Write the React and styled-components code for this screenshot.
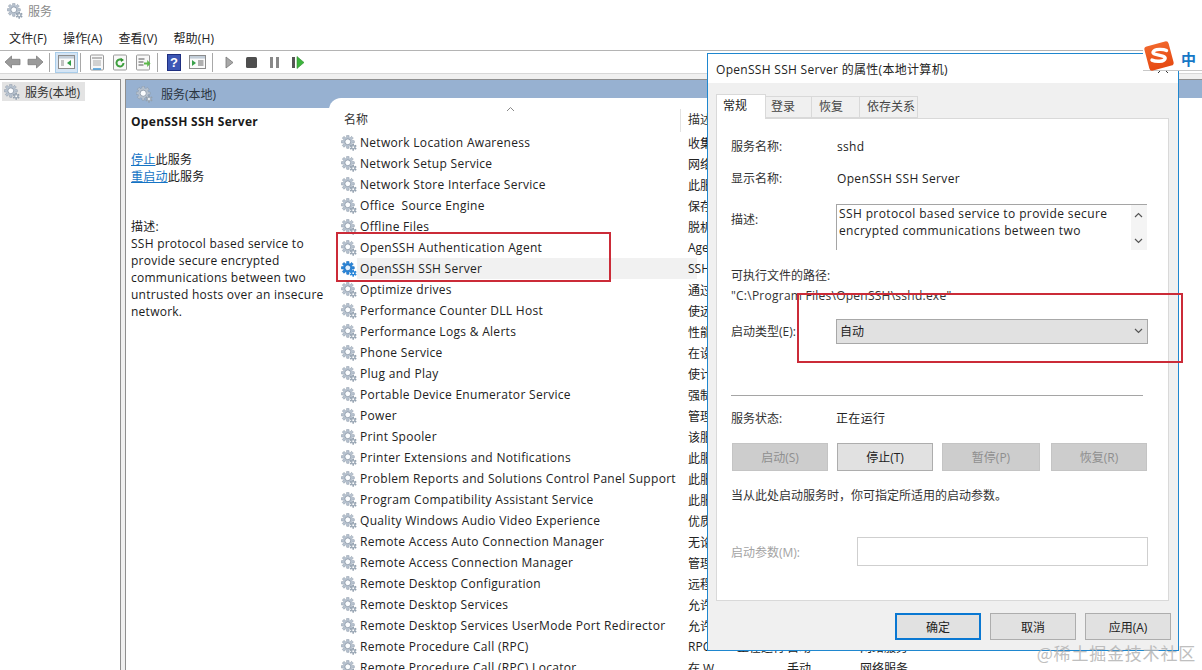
import React from "react";
import styled, { createGlobalStyle } from "styled-components";

const Global = createGlobalStyle`
  html, body { margin: 0; padding: 0; background: #fff; width: 1202px; height: 670px; overflow: hidden; }
  body { font-family: "Open Sans", "Noto Sans CJK SC", sans-serif; font-size: 12px; color: #1a1a1a; }
  * { box-sizing: border-box; }
`;

const Page = styled.div`
  position: relative; width: 1202px; height: 670px; overflow: hidden; background: #fff;
  display: flex; flex-direction: column;
`;
const TitleBar = styled.div`
  height: 26px; display: flex; align-items: center; gap: 5px; padding: 0 0 5px 7px; color: #8a8a8a; font-size: 12px;
`;
const MenuBar = styled.div`
  height: 24px; display: flex; align-items: center; gap: 16px; padding: 0 0 1px 9px; font-size: 12px; color: #222; letter-spacing: .15px;
`;
const ToolBar = styled.div`
  height: 23px; border-top: 1px solid #b4b4b4; display: flex; align-items: center; background: #fff;
`;
const ToolIcon = styled.div`
  width: ${p => p.$w || 23}px; height: 21px; flex: none; display: flex; align-items: center; justify-content: center;
  ${p => p.$on && `background:#d5e5f5; box-shadow: inset 0 0 0 1px #a9cdea;`}
`;
const Sep = styled.div`width: 1px; height: 19px; flex: none; background: #a8a8a8; margin: 0 ${p => p.$r}px 0 ${p => p.$l}px;`;
const Body = styled.div`
  flex: 1; display: flex; background: #f0f0f0; padding-top: 5px; border-top: 1px solid #d8d8d8; min-height: 0;
`;
const Tree = styled.div`
  width: 121px; background: #fff; border-top: 1px solid #8f8f8f; border-right: 1px solid #8f8f8f; padding: 2px 0 0 2px;
`;
const TreeItem = styled.div`
  width: 83px; height: 19px; background: #e3e3e3; display: flex; align-items: center; gap: 5px; padding-left: 2px; font-size: 12px; color: #333;
`;
const Main = styled.div`
  flex: 1; margin-left: 4px; border-left: 1px solid #8f8f8f; border-top: 1px solid #8f8f8f; background: #fff; display: flex; flex-direction: column; min-width: 0;
`;
const Band = styled.div`
  height: 28px; background: #97b1d1; display: flex; align-items: center; gap: 8px; padding: 0 0 0 10px; font-size: 12px; color: #2a3440;
`;
const Split = styled.div`flex: 1; display: flex; min-height: 0;`;
const Info = styled.div`width: 203px; padding: 5px 0 0 5px; font-size: 12px; line-height: 17px; letter-spacing: .25px;`;
const InfoTitle = styled.div`font-weight: 700; font-size: 12px; letter-spacing: .3px; margin-bottom: 21px;`;
const InfoLink = styled.span`color: #1473c4; text-decoration: underline;`;
const InfoGap = styled.div`height: 33px;`;
const ListPane = styled.div`
  flex: 1; margin-top: -10px; background: #fff; border-radius: 12px 0 0 0; min-width: 0; overflow: hidden; position: relative;
`;
const ListHead = styled.div`
  position: relative; height: 34px; display: flex; align-items: flex-end; padding: 0 0 4px 15px; font-size: 12px; color: #333;
`;
const SortMark = styled.svg`position: absolute; left: 177px; top: 8px;`;
const HeadRule = styled.div`position: absolute; left: 351px; top: 11px; width: 1px; height: 23px; background: #e2e2e2;`;
const HeadDesc = styled.span`position: absolute; left: 359px; bottom: 4px;`;
const Row = styled.div`
  height: 21px; display: flex; align-items: center; padding-left: 12px; font-size: 12px; letter-spacing: .3px; white-space: pre;
  color: #222; position: relative;
`;
const RowSel = styled.div`
  position: absolute; left: 28px; width: 340px; top: 0; bottom: 0; background: #f1f1f1;
`;
const RowName = styled.span`position: relative; width: 328px; margin-left: 3px; flex: none;`;
const RowDesc = styled.span`position: relative; width: 49px; flex: none; letter-spacing: 0;`;
const RowCell = styled.span`width: ${p => p.$w}px; flex: none; letter-spacing: 0;`;

const Dialog = styled.div`
  position: absolute; left: 707px; top: 53px; width: 472px; height: 598px; background: #f0f0f0; border: 1px solid #1f87cf;
  display: flex; flex-direction: column;
`;
const DialogTitle = styled.div`
  height: 29px; background: #fff; display: flex; align-items: center; padding-left: 8px; font-size: 12px; letter-spacing: .3px; color: #222; flex: none; position: relative;
`;
const CloseIcon = styled.svg`position: absolute; right: 10px; top: 9px;`;
const Tabs = styled.div`
  height: 35px; display: flex; align-items: flex-end; padding-left: 8px; flex: none; position: relative; z-index: 1;
`;
const Tab = styled.div`
  height: ${p => p.$on ? 25 : 22}px; width: ${p => p.$w}px; background: ${p => p.$on ? "#fff" : "#f0f0f0"};
  border: 1px solid #d9d9d9; border-left: ${p => p.$on ? "1px solid #d9d9d9" : "none"}; border-bottom: ${p => p.$on ? "none" : "1px solid #d9d9d9"};
  display: flex; align-items: center; padding-left: ${p => p.$pad}px; font-size: 12px; color: ${p => p.$on ? "#222" : "#444"};
  margin-bottom: ${p => p.$on ? -1 : 0}px; padding-bottom: ${p => p.$on ? 4 : 2}px; flex: none;
`;
const Panel = styled.div`
  margin: 0 9px 0 8px; height: 483px; flex: none; background: #fff; border: 1px solid #d9d9d9; padding: 11px 15px 0 14px; display: flex; flex-direction: column; font-size: 12px; color: #222;
`;
const FieldRow = styled.div`
  display: flex; align-items: ${p => p.$top ? "flex-start" : "center"}; height: ${p => p.$h}px; flex: none; letter-spacing: .34px; margin-top: ${p => p.$mt || 0}px;
`;
const FieldLabel = styled.span`width: ${p => p.$w || 105}px; flex: none; margin-top: ${p => p.$mt || 0}px; letter-spacing: 0; color: ${p => p.$off ? "#a3a3a3" : "#333"};`;
const FieldValue = styled.span`margin-left: ${p => p.$ml ?? 1}px;`;
const DescBox = styled.div`
  width: 311px; height: 46px; margin-top: 10px; border: 1px solid #a5a5a5; border-right: none; border-bottom: none; position: relative; padding: 0 2px; line-height: 17px; font-size: 12px; letter-spacing: .38px;
`;
const ScrollBtn = styled.svg`position: absolute; right: 4px; ${p => p.$bottom ? "bottom: 6px;" : "top: 7px;"}`;
const ScrollTrack = styled.div`position: absolute; right: 0; top: 0; bottom: 0; width: 16px; background: #f4f4f4;`;
const PlainLine = styled.div`height: ${p => p.$h}px; margin-top: ${p => p.$mt || 0}px; flex: none; letter-spacing: ${p => p.$ls ?? 0}px; color: #333; display: flex; align-items: center;`;
const Select = styled.div`
  width: 312px; height: 25px; background: #e1e1e1; border: 1px solid #a8a8a8; display: flex; align-items: center; justify-content: space-between; padding: 0 4px 0 3px; letter-spacing: 0;
`;
const Rule = styled.div`height: 1px; width: 412px; background: #a5a5a5; flex: none; margin: 38px 0 13px;`;
const ButtonRow = styled.div`display: flex; flex: none; padding-left: 1px; height: 28px; margin-top: 16px;`;
const Btn = styled.div`
  width: ${p => p.$w}px; height: 28px; margin-right: ${p => p.$mr || 0}px; flex: none; display: flex; align-items: center; justify-content: center; font-size: 12px;
  background: ${p => p.$off ? "#cdcdcd" : "#e1e1e1"}; border: 1px solid ${p => p.$off ? "#c4c4c4" : "#adadad"}; color: ${p => p.$off ? "#8f8f8f" : "#222"};
`;
const ParamInput = styled.div`width: 291px; height: 29px; background: #fff; border: 1px solid #cfcfcf;`;
const Foot = styled.div`display: flex; justify-content: flex-end; gap: 9px; padding: 12px 7px 0 0; flex: none;`;
const FootBtn = styled.div`
  width: 86px; height: 27px; background: #e1e1e1; display: flex; align-items: center; justify-content: center; font-size: 12px; color: #222;
  border: ${p => p.$primary ? "2px solid #0a78d2" : "1px solid #adadad"};
`;
const Mark = styled.div`
  position: absolute; border: 2px solid #cb2b38; pointer-events: none;
`;
const Ime = styled.div`
  position: absolute; left: 1143px; top: 45px; width: 59px; height: 26px; background: #fff; border-bottom: 1px solid #c8c8c8;
`;
const ImeLogo = styled.svg`position: absolute; left: -1px; top: -6px;`;
const ImeText = styled.span`position: absolute; left: 38px; top: 3px; font-size: 15px; font-weight: 700; color: #1677c6;`;
const Watermark = styled.div`
  position: absolute; right: 6px; bottom: 5px; font-family: "Noto Sans CJK SC", sans-serif; font-size: 17px; color: #b4b4b4; letter-spacing: .8px; opacity: .85;
`;

const Gear = ({ size = 16, blue }) => {
  const c = blue ? "#2a86d8" : "#b7c2cf";
  const d = blue ? "#135fae" : "#7f8c9c";
  const teeth = [0, 45, 90, 135];
  return (
    <svg width={size} height={size} viewBox="0 0 16 16" style={{ flex: "none", position: "relative" }}>
      <g transform="translate(6.8 6.8)">
        {teeth.map(a => <rect key={a} x="-1.3" y="-6.6" width="2.6" height="13.2" rx=".6" fill={c} stroke={d} strokeWidth=".4" transform={`rotate(${a})`} />)}
        <circle r="4.6" fill={c} />
        <circle r="2.9" fill={blue ? "#dff0ff" : "#fbfdff"} stroke={d} strokeWidth=".7" />
      </g>
      <g transform="translate(12.2 12.2)">
        {[0, 60, 120].map(a => <rect key={a} x="-.8" y="-3.5" width="1.6" height="7" fill={blue ? "#2a86d8" : "#93a0ae"} transform={`rotate(${a})`} />)}
        <circle r="2.2" fill={blue ? "#2a86d8" : "#a3afbc"} />
        <circle r=".9" fill="#fff" />
      </g>
    </svg>
  );
};

const Arrow = ({ flip }) => (
  <svg width="17" height="14" viewBox="0 0 17 14" style={flip ? { transform: "scaleX(-1)" } : undefined}>
    <path d="M1 7 7.5 1v3.3H16v5.4H7.5V13z" fill="#9a9a9a" stroke="#7d7d7d" strokeWidth=".8" />
  </svg>
);
const WinIcon = ({ green, help }) => (
  <svg width="17" height="16" viewBox="0 0 17 16">
    <rect x=".5" y="1.5" width="16" height="13" fill="#fbfbfb" stroke="#8c8c8c" />
    <rect x="1" y="2" width="15" height="2.6" fill="#c3ced9" />
    {help
      ? <><path d="M3 6v6l4-3z" fill="#3aa14a" /><path d="M9 6.5h5.5v1H9zM9 8.5h5.5v1H9zM9 10.5h5.5v1H9z" fill="#666" /></>
      : <><path d="M3 6.5h3v1H3zM3 8.5h3v1H3zM3 10.5h3v1H3z" fill="#8a8a8a" /><path d="M13 6v6l-4-3z" fill={green ? "#2f9e44" : "#555"} /></>}
  </svg>
);
const DocIcon = ({ kind }) => (
  <svg width="16" height="17" viewBox="0 0 16 17">
    <rect x="1.5" y="1" width="13" height="15" rx="1" fill="#f8f8f8" stroke="#9a9a9a" />
    {kind === "list" && <><rect x="3" y="3" width="10" height="2" fill="#bbb" /><path d="M4 7h8M4 9h8M4 11h8" stroke="#aaa" /><path d="M4 15h8" stroke="#4a9bd8" strokeWidth="1.6" /></>}
    {kind === "refresh" && <><path d="M11.5 9a3.5 3.5 0 1 1-1.2-2.7" fill="none" stroke="#3f9f3f" strokeWidth="2" /><path d="M8.6 3.8 12 6 9 8z" fill="#2f8f2f" /></>}
    {kind === "export" && <><path d="M3.5 5h6M3.5 8h5M3.5 11h5" stroke="#555" /><path d="M9 8.5h3.2V6l3.3 3.5-3.3 3.5v-2.5H9z" fill="#5cb84a" /></>}
  </svg>
);
const HelpIcon = () => (
  <svg width="14" height="17" viewBox="0 0 14 17">
    <rect x=".5" y=".5" width="13" height="16" fill="#3d57b5" stroke="#1f2f80" />
    <text x="7" y="13" textAnchor="middle" fontSize="13" fontWeight="700" fill="#fff" fontFamily="Liberation Sans, sans-serif">?</text>
  </svg>
);
const Play = () => <svg width="9" height="13" viewBox="0 0 9 13"><path d="M1 1l7 5.5L1 12z" fill="#a8a8a8" stroke="#777" strokeWidth=".8" /></svg>;
const Stop = () => <svg width="11" height="11" viewBox="0 0 11 11"><rect width="11" height="11" rx="1.5" fill="#4e4e4e" /></svg>;
const Pause = () => <svg width="9" height="11" viewBox="0 0 9 11"><path d="M0 0h3v11H0zM6 0h3v11H6z" fill="#888" /></svg>;
const Resume = () => <svg width="12" height="13" viewBox="0 0 12 13"><path d="M0 1h3v11H0z" fill="#555" /><path d="M5 0.5l7 6-7 6z" fill="#3db43d" stroke="#2b8f2b" strokeWidth=".6" /></svg>;
const Chevron = ({ up, c = "#555" }) => (
  <svg width="9" height="6" viewBox="0 0 9 6"><path d={up ? "M1 5l3.5-3.5L8 5" : "M1 1l3.5 3.5L8 1"} fill="none" stroke={c} strokeWidth="1.2" /></svg>
);

const services = [
  { name: "Network Location Awareness", desc: "收集" }, { name: "Network Setup Service", desc: "网络" }, { name: "Network Store Interface Service", desc: "此服" },
  { name: "Office  Source Engine", desc: "保存" }, { name: "Offline Files", desc: "脱机" }, { name: "OpenSSH Authentication Agent", desc: "Age" },
  { name: "OpenSSH SSH Server", desc: "SSH", sel: true }, { name: "Optimize drives", desc: "通过" }, { name: "Performance Counter DLL Host", desc: "使远" },
  { name: "Performance Logs & Alerts", desc: "性能" }, { name: "Phone Service", desc: "在设" }, { name: "Plug and Play", desc: "使计" },
  { name: "Portable Device Enumerator Service", desc: "强制" }, { name: "Power", desc: "管理" }, { name: "Print Spooler", desc: "该服" },
  { name: "Printer Extensions and Notifications", desc: "此服" }, { name: "Problem Reports and Solutions Control Panel Support", desc: "此服" },
  { name: "Program Compatibility Assistant Service", desc: "此服" }, { name: "Quality Windows Audio Video Experience", desc: "优质" },
  { name: "Remote Access Auto Connection Manager", desc: "无论" }, { name: "Remote Access Connection Manager", desc: "管理" },
  { name: "Remote Desktop Configuration", desc: "远程" }, { name: "Remote Desktop Services", desc: "允许" },
  { name: "Remote Desktop Services UserMode Port Redirector", desc: "允许" },
  { name: "Remote Procedure Call (RPC)", desc: "RPC", status: "正在运行", start: "自动", logon: "网络服务" },
  { name: "Remote Procedure Call (RPC) Locator", desc: "在 W", start: "手动", logon: "网络服务" },
];

export default function App() {
  return (
    <Page>
      <Global />
      <TitleBar><Gear size={16} /><span>服务</span></TitleBar>
      <MenuBar><span>文件(F)</span><span>操作(A)</span><span>查看(V)</span><span>帮助(H)</span></MenuBar>
      <ToolBar>
        <ToolIcon $w={24}><Arrow /></ToolIcon>
        <ToolIcon $w={22}><Arrow flip /></ToolIcon>
        <Sep $l={3} $r={5} />
        <ToolIcon $on><WinIcon green /></ToolIcon>
        <Sep $l={2} $r={4} />
        <ToolIcon><DocIcon kind="list" /></ToolIcon>
        <ToolIcon $w={24}><DocIcon kind="refresh" /></ToolIcon>
        <ToolIcon $w={22}><DocIcon kind="export" /></ToolIcon>
        <Sep $l={3} $r={4} />
        <ToolIcon><HelpIcon /></ToolIcon>
        <ToolIcon $w={24}><WinIcon green help /></ToolIcon>
        <Sep $l={3} $r={5} />
        <ToolIcon><Play /></ToolIcon>
        <ToolIcon $w={20}><Stop /></ToolIcon>
        <ToolIcon $w={26}><Pause /></ToolIcon>
        <ToolIcon $w={21}><Resume /></ToolIcon>
      </ToolBar>
      <Body>
        <Tree><TreeItem><Gear size={16} /><span>服务(本地)</span></TreeItem></Tree>
        <Main>
          <Band><Gear size={17} /><span>服务(本地)</span></Band>
          <Split>
            <Info>
              <InfoTitle>OpenSSH SSH Server</InfoTitle>
              <div><InfoLink>停止</InfoLink>此服务</div>
              <div><InfoLink>重启动</InfoLink>此服务</div>
              <InfoGap />
              <div>描述:</div>
              <div>SSH protocol based service to provide secure encrypted communications between two untrusted hosts over an insecure network.</div>
            </Info>
            <ListPane>
              <ListHead>
                <SortMark width="9" height="6" viewBox="0 0 9 6"><path d="M1 5l3.5-3.5L8 5" fill="none" stroke="#888" strokeWidth="1" /></SortMark>
                <span>名称</span>
                <HeadRule />
                <HeadDesc>描述</HeadDesc>
              </ListHead>
              {services.map(({ name, desc, sel, status, start, logon }) => (
                <Row key={name}>
                  {sel && <RowSel />}
                  <Gear size={16} blue={sel} />
                  <RowName>{name}</RowName>
                  <RowDesc>{desc}</RowDesc>
                  <RowCell $w={50}>{status}</RowCell>
                  <RowCell $w={73}>{start}</RowCell>
                  <RowCell $w={60}>{logon}</RowCell>
                </Row>
              ))}
            </ListPane>
          </Split>
        </Main>
      </Body>

      <Dialog>
        <DialogTitle>
          OpenSSH SSH Server 的属性(本地计算机)
          <CloseIcon width="10" height="10" viewBox="0 0 10 10"><path d="M0 0l10 10M10 0L0 10" stroke="#333" strokeWidth="1" /></CloseIcon>
        </DialogTitle>
        <Tabs>
          <Tab $on $w={50} $pad={6}>常规</Tab>
          <Tab $w={46} $pad={5}>登录</Tab>
          <Tab $w={48} $pad={7}>恢复</Tab>
          <Tab $w={58} $pad={7}>依存关系</Tab>
        </Tabs>
        <Panel>
          <FieldRow $h={32}><FieldLabel>服务名称:</FieldLabel><FieldValue>sshd</FieldValue></FieldRow>
          <FieldRow $h={32}><FieldLabel>显示名称:</FieldLabel><FieldValue>OpenSSH SSH Server</FieldValue></FieldRow>
          <FieldRow $h={70} $top>
            <FieldLabel $mt={16}>描述:</FieldLabel>
            <DescBox>
              <ScrollTrack />
              <ScrollBtn width="9" height="6" viewBox="0 0 9 6"><path d="M1 5l3.5-3.5L8 5" fill="none" stroke="#555" strokeWidth="1.2" /></ScrollBtn>
              <ScrollBtn $bottom width="9" height="6" viewBox="0 0 9 6"><path d="M1 1l3.5 3.5L8 1" fill="none" stroke="#555" strokeWidth="1.2" /></ScrollBtn>
              SSH protocol based service to provide secure<br />encrypted communications between two
            </DescBox>
          </FieldRow>
          <PlainLine $h={21}>可执行文件的路径:</PlainLine>
          <PlainLine $h={20} $ls={.25}>"C:\Program Files\OpenSSH\sshd.exe"</PlainLine>
          <FieldRow $h={52}>
            <FieldLabel>启动类型(E):</FieldLabel>
            <Select><span>自动</span><Chevron /></Select>
          </FieldRow>
          <Rule />
          <FieldRow $h={18}><FieldLabel>服务状态:</FieldLabel><FieldValue $ml={0}>正在运行</FieldValue></FieldRow>
          <ButtonRow>
            <Btn $off $w={96} $mr={9}>启动(S)</Btn>
            <Btn $w={96} $mr={9}>停止(T)</Btn>
            <Btn $off $w={98} $mr={11}>暂停(P)</Btn>
            <Btn $off $w={96}>恢复(R)</Btn>
          </ButtonRow>
          <PlainLine $h={18} $mt={15}>当从此处启动服务时，你可指定所适用的启动参数。</PlainLine>
          <FieldRow $h={29} $mt={33}>
            <FieldLabel $off $w={126}>启动参数(M):</FieldLabel>
            <ParamInput />
          </FieldRow>
        </Panel>
        <Foot>
          <FootBtn $primary>确定</FootBtn>
          <FootBtn>取消</FootBtn>
          <FootBtn>应用(A)</FootBtn>
        </Foot>
      </Dialog>

      <Mark style={{ left: 336, top: 232, width: 275, height: 50 }} />
      <Mark style={{ left: 797, top: 293, width: 386, height: 70 }} />
      <Ime>
        <ImeLogo width="34" height="34" viewBox="0 0 34 34">
          <defs>
            <linearGradient id="imeFill" x1="0" y1="0" x2="0" y2="1">
              <stop offset="0" stopColor="#f1662b" />
              <stop offset="1" stopColor="#e64a12" />
            </linearGradient>
          </defs>
          <rect x="4.5" y="4.5" width="25" height="25" rx="3" fill="url(#imeFill)" transform="rotate(-15 17 17)" />
          <path d="M24.5 11.5c-3-1.4-12-2-13.400 1.600-1 3.400 12.600 2.600 12 6.400-.8 3.400-9.400 3.400-13.100 1.600" fill="none" stroke="#fff" strokeWidth="3.400" strokeLinecap="round" />
        </ImeLogo>
        <ImeText>中</ImeText>
      </Ime>
      <Watermark>@稀土掘金技术社区</Watermark>
    </Page>
  );
}
